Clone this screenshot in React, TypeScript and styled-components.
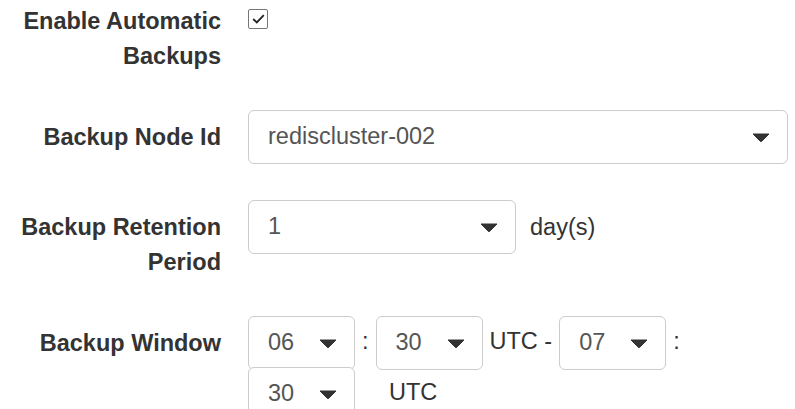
import styled, { createGlobalStyle } from "styled-components";

const GlobalStyle = createGlobalStyle`
  html, body {
    margin: 0;
    padding: 0;
    background: #fff;
  }
  body {
    font-family: "Liberation Sans", Arial, sans-serif;
    font-size: 23.5px;
    color: #333;
  }
`;

const Form = styled.form`
  width: 788px;
  padding-top: 4px;
`;

const FormGroup = styled.div`
  display: grid;
  grid-template-columns: 221px 540px;
  column-gap: 27px;
  margin-bottom: 36px;
`;

const Label = styled.label<{ $flush?: boolean }>`
  box-sizing: border-box;
  padding-left: 10px;
  padding-top: ${(p) => (p.$flush ? "0" : "10px")};
  text-align: right;
  font-weight: bold;
  line-height: 35px;
  color: #333;
`;

const Controls = styled.div<{ $tight?: boolean; $top?: boolean }>`
  display: flex;
  flex-wrap: wrap;
  align-items: center;
  align-self: ${(p) => (p.$top ? "start" : "stretch")};
  column-gap: 7px;

  & > div {
    margin-bottom: ${(p) => (p.$tight ? "-3px" : "0")};
  }
`;

const CheckBox = styled.span`
  box-sizing: border-box;
  display: flex;
  align-items: center;
  justify-content: center;
  width: 20px;
  height: 20px;
  margin-top: 5px;
  border: 1.5px solid #767676;
  border-radius: 2px;
  background: #fff;
  align-self: flex-start;
`;

const SelectBox = styled.div<{ $width: number }>`
  box-sizing: border-box;
  display: flex;
  align-items: center;
  justify-content: space-between;
  width: ${(p) => p.$width}px;
  height: 54px;
  padding: 0 17px 0 19px;
  border: 1px solid #ccc;
  border-radius: 6px;
  background: #fff;
  color: #555;
`;

const Value = styled.span`
  line-height: 1;
`;

const Text = styled.span<{ $pad?: number }>`
  color: #333;
  margin-left: ${(p) => p.$pad ?? 0}px;
  white-space: nowrap;
`;

function Caret() {
  return (
    <svg width="18" height="9" viewBox="0 0 18 9">
      <path d="M1 1 H17 L9.6 8.4 Q9 9 8.4 8.4 Z" fill="#333" stroke="#333" strokeWidth="1" strokeLinejoin="round" />
    </svg>
  );
}

function Select({ value, width }: { value: string; width: number }) {
  return (
    <SelectBox $width={width}>
      <Value>{value}</Value>
      <Caret />
    </SelectBox>
  );
}

export default function App() {
  return (
    <>
      <GlobalStyle />
      <Form>
        <FormGroup>
          <Label $flush>Enable Automatic Backups</Label>
          <Controls>
            <CheckBox>
              <svg width="13" height="10" viewBox="0 0 13 10">
                <path d="M1.2 5 L4.8 8.4 L11.8 1.2" fill="none" stroke="#222" strokeWidth="1.8" />
              </svg>
            </CheckBox>
          </Controls>
        </FormGroup>
        <FormGroup>
          <Label>Backup Node Id</Label>
          <Controls>
            <Select value="rediscluster-002" width={540} />
          </Controls>
        </FormGroup>
        <FormGroup>
          <Label>Backup Retention Period</Label>
          <Controls $top>
            <Select value="1" width={268} />
            <Text $pad={7}>day(s)</Text>
          </Controls>
        </FormGroup>
        <FormGroup>
          <Label>Backup Window</Label>
          <Controls $tight $top>
            <Select value="06" width={107} />
            <Text>:</Text>
            <Select value="30" width={107} />
            <Text>UTC -</Text>
            <Select value="07" width={107} />
            <Text>:</Text>
            <Select value="30" width={107} />
            <Text $pad={27}>UTC</Text>
          </Controls>
        </FormGroup>
      </Form>
    </>
  );
}
